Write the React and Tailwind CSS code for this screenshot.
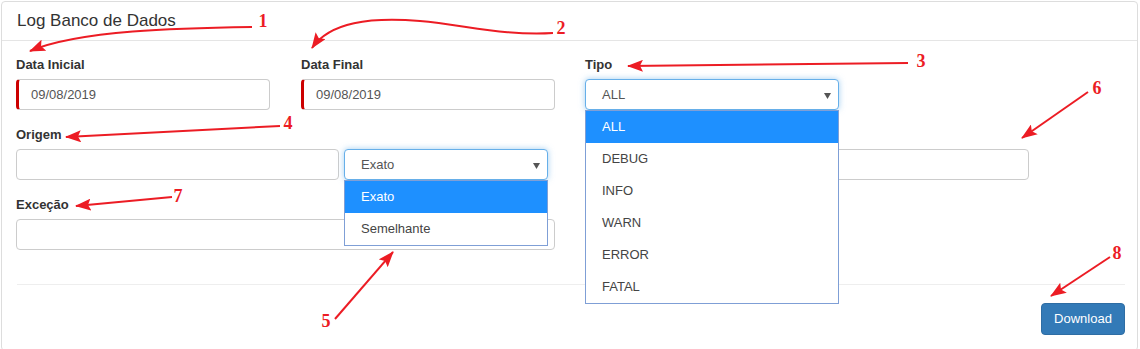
import React from "react";

const RED = "#ec1c24";

function Caret() {
  return (
    <svg width="7" height="6" viewBox="0 0 7 6" className="absolute right-[7px] top-[13px]">
      <polygon points="0,0 7,0 3.5,6" fill="#555" />
    </svg>
  );
}

function Label({ children, className = "" }) {
  return (
    <div className={"h-[18px] leading-[18px] mb-[5px] text-[13px] font-bold text-[#333] " + className}>
      {children}
    </div>
  );
}

function DateInput({ value }) {
  return (
    <div className="h-[31px] w-[254px] border border-[#ccc] border-l-[3px] border-l-[#cc0000] rounded-[4px] bg-white flex items-center pl-[12px] text-[13px] text-[#555]">
      {value}
    </div>
  );
}

function TextInput({ w }) {
  return <div className={"h-[31px] border border-[#ccc] rounded-[4px] bg-white " + w} />;
}

function OpenSelect({ value, options, w }) {
  return (
    <div className={"relative " + w}>
      <div className="relative h-[31px] border border-[#66afe9] rounded-[4px] bg-white flex items-center pl-[16px] text-[13px] text-[#555] shadow-[0_0_6px_rgba(102,175,233,0.6)]">
        {value}
        <Caret />
      </div>
      <div className="absolute left-0 top-[31px] w-full z-10 bg-white border border-[#7f9fd6]">
        {options.map((o, i) => (
          <div
            key={o}
            className={
              "h-[32px] flex items-center pl-[16px] text-[13px] " +
              (i === 0 ? "bg-[#1e90ff] text-white" : "text-[#444]")
            }
          >
            {o}
          </div>
        ))}
      </div>
    </div>
  );
}

function Annotations() {
  const lines = [
    "M252,27 C180,28 80,30 30,51",
    "M553,33 C505,36 465,25 420,21 C370,17 330,22 312,48",
    "M908,63 L628,66",
    "M280,126 L66,137",
    "M335,319 L393,252",
    "M1088,92 L1022,138",
    "M172,197 L76,206",
    "M1110,257 L1051,296",
  ];
  const nums = [
    ["1", 263, 27],
    ["2", 561, 34],
    ["3", 921, 67],
    ["4", 288, 129],
    ["5", 326, 327],
    ["6", 1097, 94],
    ["7", 178, 202],
    ["8", 1117, 259],
  ];
  return (
    <svg
      className="absolute left-0 top-0 z-20 pointer-events-none"
      width="1140"
      height="349"
      viewBox="0 0 1140 349"
    >
      <defs>
        <marker
          id="ah"
          markerUnits="userSpaceOnUse"
          markerWidth="16"
          markerHeight="12"
          refX="15"
          refY="6"
          orient="auto"
        >
          <path d="M0,0 L16,6 L0,12 L3,6 z" fill={RED} />
        </marker>
      </defs>
      {lines.map((d, i) => (
        <path key={i} d={d} stroke={RED} strokeWidth="2" fill="none" markerEnd="url(#ah)" />
      ))}
      {nums.map(([t, x, y]) => (
        <text
          key={t}
          x={x}
          y={y}
          textAnchor="middle"
          fill={RED}
          fontFamily="'Liberation Serif', 'Times New Roman', serif"
          fontWeight="bold"
          fontSize="18"
        >
          {t}
        </text>
      ))}
    </svg>
  );
}

export default function App() {
  return (
    <div className="relative w-[1140px] h-[349px] overflow-hidden bg-white font-['Liberation_Sans',Arial,sans-serif]">
      <div className="ml-[1px] mt-[1px] w-[1137px] border border-[#ddd] rounded-[4px] bg-white">
        <div className="h-[39px] border-b border-[#e5e5e5] flex items-center px-[15px] text-[17px] text-[#333]">
          Log Banco de Dados
        </div>
        <div className="pt-[15px] pl-[14px] pr-[12px] pb-[15px]">
          {/* Row 1 */}
          <div className="flex gap-x-[30px] mb-[16px]">
            <div className="w-[255px]">
              <Label>Data Inicial</Label>
              <DateInput value="09/08/2019" />
            </div>
            <div className="w-[254px]">
              <Label>Data Final</Label>
              <DateInput value="09/08/2019" />
            </div>
            <div className="w-[254px] relative z-10">
              <Label>Tipo</Label>
              <OpenSelect
                value="ALL"
                w="w-[254px]"
                options={["ALL", "DEBUG", "INFO", "WARN", "ERROR", "FATAL"]}
              />
            </div>
          </div>
          {/* Row 2 */}
          <div className="flex gap-x-[30px] mb-[16px]">
            <div className="w-[539px]">
              <Label>Origem</Label>
              <div className="flex gap-x-[5px]">
                <TextInput w="w-[323px]" />
                <div className="relative z-10">
                  <OpenSelect value="Exato" w="w-[204px]" options={["Exato", "Semelhante"]} />
                </div>
              </div>
            </div>
            <div className="w-[444px]">
              <Label>&nbsp;</Label>
              <TextInput w="w-[444px]" />
            </div>
          </div>
          {/* Row 3 */}
          <div className="w-[539px] mb-[34px]">
            <Label>Exceção</Label>
            <TextInput w="w-[539px]" />
          </div>
          <div className="h-px bg-[#eee] ml-[1px] mb-[18px]" />
          <div className="flex justify-end">
            <button className="h-[32px] w-[84px] rounded-[4px] bg-[#337ab7] border border-[#2e6da4] text-white text-[13px]">
              Download
            </button>
          </div>
        </div>
      </div>
      <Annotations />
    </div>
  );
}
